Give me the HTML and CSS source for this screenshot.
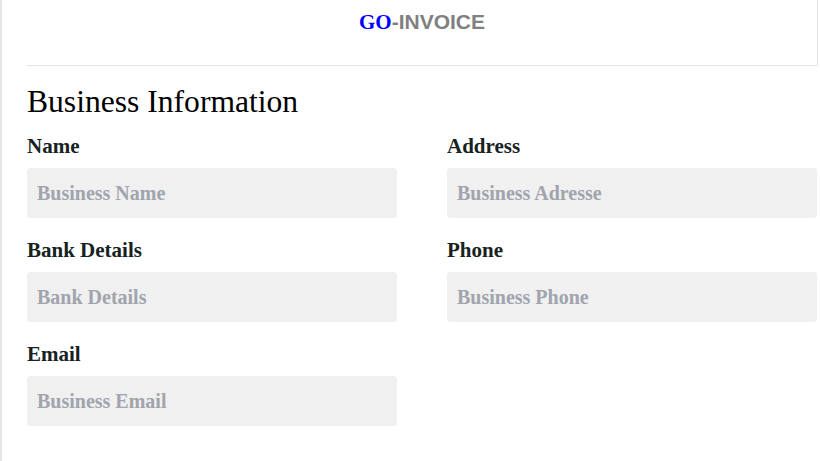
FILE: index.html
```html
<!DOCTYPE html>
<html lang="en">
<head>
<meta charset="utf-8">
<title>GO-INVOICE</title>
<link rel="stylesheet" href="styles.css">
</head>
<body>
<div class="page">
  <header class="topbar">
    <div class="brand"><span class="brand-go">GO</span><span class="brand-rest">-INVOICE</span></div>
  </header>
  <section class="section">
    <h1 class="section-title">Business Information</h1>
    <div class="form-grid">
      <div class="field">
        <label class="field-label" for="bname">Name</label>
        <input class="field-input" id="bname" type="text" placeholder="Business Name">
      </div>
      <div class="field">
        <label class="field-label" for="baddr">Address</label>
        <input class="field-input" id="baddr" type="text" placeholder="Business Adresse">
      </div>
      <div class="field">
        <label class="field-label" for="bbank">Bank Details</label>
        <input class="field-input" id="bbank" type="text" placeholder="Bank Details">
      </div>
      <div class="field">
        <label class="field-label" for="bphone">Phone</label>
        <input class="field-input" id="bphone" type="text" placeholder="Business Phone">
      </div>
      <div class="field">
        <label class="field-label" for="bemail">Email</label>
        <input class="field-input" id="bemail" type="text" placeholder="Business Email">
      </div>
    </div>
  </section>
</div>
</body>
</html>
```

FILE: styles.css
```css
html, body {
  margin: 0;
  padding: 0;
  background: #ffffff;
}

body {
  font-family: "Liberation Serif", "Times New Roman", serif;
}

.page {
  min-height: 461px;
  box-sizing: border-box;
  border-left: 2px solid #e6e6e6;
  padding: 0 2px 0 25px;
}

.topbar {
  height: 66px;
  box-sizing: border-box;
  border-right: 1px solid #e6e6e6;
  border-bottom: 1px solid #e6e6e6;
  padding-top: 10px;
  text-align: center;
}

.brand {
  font-size: 21px;
  line-height: 24px;
  font-weight: bold;
}

.brand-go {
  color: #0000ff;
  font-family: "Liberation Serif", "Times New Roman", serif;
}

.brand-rest {
  color: #808080;
  font-family: "Liberation Sans", Arial, sans-serif;
}

.section {
  padding-top: 18px;
}

.section-title {
  margin: 0 0 14px 0;
  font-size: 31.6px;
  line-height: 36px;
  font-weight: normal;
  color: #000000;
}

.form-grid {
  display: grid;
  grid-template-columns: 370px 370px;
  column-gap: 50px;
  row-gap: 20px;
  width: 790px;
}

.field {
  display: flex;
  flex-direction: column;
}

.field-label {
  font-size: 21px;
  line-height: 24px;
  font-weight: bold;
  color: #172222;
  margin-bottom: 10px;
}

.field-input {
  height: 50px;
  box-sizing: border-box;
  border: none;
  border-radius: 4px;
  background: #f0f0f0;
  padding: 0 10px;
  font-family: "Liberation Serif", "Times New Roman", serif;
  font-size: 20px;
  font-weight: bold;
  color: #333333;
  outline: none;
}

.field-input::placeholder {
  color: #a0a4ad;
  opacity: 1;
}
```
